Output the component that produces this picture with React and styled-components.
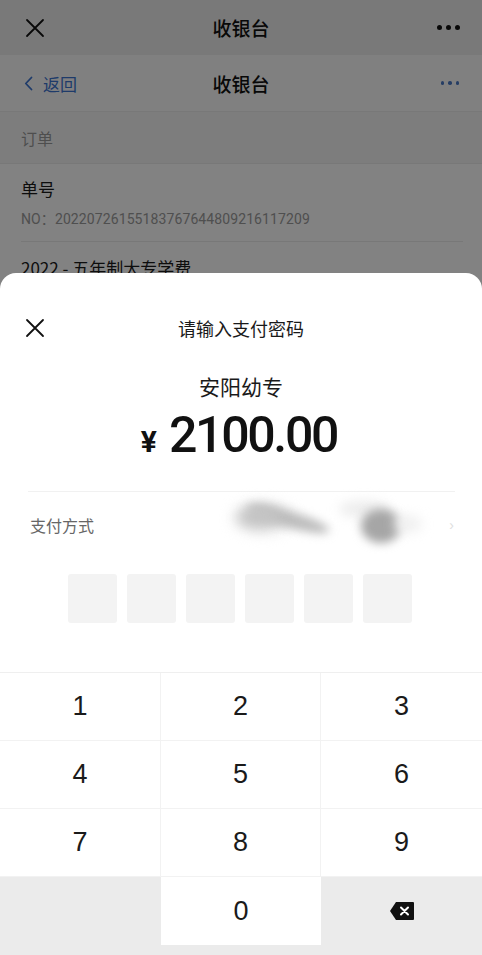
import React from "react";
import styled, { createGlobalStyle } from "styled-components";

const Global = createGlobalStyle`
  html, body { margin: 0; padding: 0; }
  body { font-family: "Noto Sans CJK SC", "Noto Sans", sans-serif; background: #fff; }
  * { box-sizing: border-box; }
`;

const CJK = `"Noto Sans CJK SC", "Noto Sans", sans-serif`;

const Page = styled.div`
  position: relative;
  width: 482px;
  height: 955px;
  overflow: hidden;
  background: #fff;
  display: flex;
  flex-direction: column;
`;

const WxBar = styled.div`
  height: 55px;
  background: #ededed;
  display: flex;
  align-items: center;
  justify-content: space-between;
  padding: 0 22px 0 25px;
  position: relative;
`;

const BarTitle = styled.div`
  position: absolute;
  left: 0;
  right: 0;
  text-align: center;
  font-family: ${CJK};
  font-size: ${(p) => p.$size || 19}px;
  font-weight: 500;
  color: #111;
  pointer-events: none;
`;

const Dots = styled.div`
  display: flex;
  gap: ${(p) => p.$gap}px;
  span {
    width: ${(p) => p.$dot}px;
    height: ${(p) => p.$dot}px;
    border-radius: 50%;
    background: ${(p) => p.$color};
  }
`;

const PageHeader = styled.div`
  height: 57px;
  background: #fcfcfc;
  border-bottom: 1px solid #ececec;
  display: flex;
  align-items: center;
  justify-content: space-between;
  padding: 0 23px 0 24px;
  position: relative;
`;

const Back = styled.div`
  display: flex;
  align-items: center;
  gap: 10px;
  color: #3c74d0;
  font-family: ${CJK};
  font-size: 17px;
`;

const SectionHead = styled.div`
  height: 52px;
  background: #f6f6f6;
  border-bottom: 1px solid #ececec;
  display: flex;
  align-items: center;
  padding-left: 21px;
  color: #9a9a9a;
  font-size: 16px;
  font-family: ${CJK};
`;

const Item = styled.div`
  margin: 0 19px 0 21px;
  padding: ${(p) => (p.$first ? "12px 0 11px" : "13px 0 10px")};
  border-bottom: 1px solid #ececec;
`;

const ItemTitle = styled.div`
  font-size: 17px;
  color: #1a1a1a;
  line-height: 26px;
  font-family: ${CJK};
`;

const ItemSub = styled.div`
  margin-top: 6px;
  font-size: 14px;
  color: #9b9b9b;
  line-height: 22px;
  font-family: "Roboto", ${CJK};
  letter-spacing: 0.1px;
`;

const Dim = styled.div`
  position: absolute;
  inset: 0;
  background: rgba(0, 0, 0, 0.49);
`;

const Sheet = styled.div`
  position: absolute;
  left: 0;
  right: 0;
  bottom: 0;
  height: 682px;
  background: #fff;
  border-radius: 16px 16px 0 0;
  display: flex;
  flex-direction: column;
`;

const SheetTitle = styled.div`
  position: relative;
  height: 26px;
  margin-top: 42px;
  display: flex;
  align-items: center;
  padding-left: 25px;
`;

const TitleText = styled.div`
  position: absolute;
  left: 0;
  right: 0;
  text-align: center;
  font-size: 18px;
  color: #1a1a1a;
  font-family: ${CJK};
  line-height: 26px;
`;

const Merchant = styled.div`
  margin-top: 31px;
  text-align: center;
  font-size: 21px;
  line-height: 28px;
  color: #1a1a1a;
  font-family: ${CJK};
`;

const Amount = styled.div`
  margin-top: 5px;
  height: 60px;
  display: flex;
  align-items: baseline;
  justify-content: center;
  color: #111;
  font-family: "Roboto", sans-serif;
  font-weight: 500;
  padding-right: 4px;
`;

const Yen = styled.span`
  font-size: 30px;
  font-weight: 700;
  margin-right: 12px;
  line-height: 60px;
`;

const Num = styled.span`
  font-size: 50px;
  letter-spacing: -2.3px;
  line-height: 60px;
`;

const Divider = styled.div`
  margin: 26px 27px 0 28px;
  height: 1px;
  background: #f1f1f1;
`;

const PayRow = styled.div`
  height: 66px;
  display: flex;
  align-items: center;
  padding: 0 28px 0 30px;
`;

const PayLabel = styled.div`
  font-size: 16px;
  color: #666;
  font-family: ${CJK};
  flex: 1;
`;

const Redacted = styled.div`
  position: relative;
  width: 180px;
  height: 56px;
  margin-right: 30px;
`;

const Blob = styled.div`
  position: absolute;
  background: ${(p) => p.$c};
  filter: blur(${(p) => p.$b}px);
  border-radius: 50%;
`;

const Chevron = styled.div`
  color: #dedede;
  font-size: 14px;
  font-family: "Liberation Sans", sans-serif;
`;

const Boxes = styled.div`
  margin-top: 16px;
  display: flex;
  gap: 10px;
  padding-left: 68px;
`;

const Box = styled.div`
  width: 49px;
  height: 49px;
  background: #f3f3f3;
  border-radius: 3px;
`;

const KeypadWrap = styled.div`
  margin-top: auto;
  background: #ebebeb;
  padding-bottom: 10px;
  border-top: 1px solid #efefef;
`;

const Keypad = styled.div`
  display: grid;
  grid-template-columns: 161px 160px 161px;
  grid-auto-rows: 68px;
`;

const Key = styled.div`
  display: flex;
  align-items: center;
  justify-content: center;
  background: ${(p) => (p.$gray ? "#ebebeb" : "#fff")};
  border-right: ${(p) => (p.$edge ? "none" : "1px solid #f2f2f2")};
  border-bottom: ${(p) => (p.$bottom ? "none" : "1px solid #f2f2f2")};
  font-family: "Liberation Sans", "Arial", sans-serif;
  font-size: 27px;
  color: #1a1a1a;
`;

const CloseIcon = ({ size = 20 }) => (
  <svg width={size} height={size} viewBox="0 0 20 20">
    <path d="M2 2 L18 18 M18 2 L2 18" stroke="#111" strokeWidth="1.8" strokeLinecap="round" />
  </svg>
);

const BackspaceIcon = () => (
  <svg width="26" height="20" viewBox="0 0 26 20">
    <path d="M7 1 H24 a1 1 0 0 1 1 1 V18 a1 1 0 0 1 -1 1 H7 L1 10 Z" fill="#111" />
    <path d="M12 6.5 L19 13.5 M19 6.5 L12 13.5" stroke="#fff" strokeWidth="2" strokeLinecap="round" />
  </svg>
);

const blobs = [
  { c: "#e4e4e4", b: 7, s: { left: -6, top: 6, width: 60, height: 30 } },
  { c: "#bcbcbc", b: 5, s: { left: 6, top: 14, width: 86, height: 16, transform: "rotate(16deg)" } },
  { c: "#c4c4c4", b: 6, s: { left: 0, top: 10, width: 40, height: 20 } },
  { c: "#ececec", b: 6, s: { left: 100, top: 4, width: 50, height: 16 } },
  { c: "#a6a6a6", b: 5, s: { left: 122, top: 12, width: 40, height: 34 } },
  { c: "#f0f0f0", b: 6, s: { left: 155, top: 18, width: 28, height: 18 } },
];

export default function App() {
  const keys = ["1", "2", "3", "4", "5", "6", "7", "8", "9"];
  return (
    <>
      <Global />
      <Page>
        <WxBar>
          <CloseIcon />
          <BarTitle>收银台</BarTitle>
          <Dots $gap={4} $dot={5} $color="#111">
            <span />
            <span />
            <span />
          </Dots>
        </WxBar>
        <PageHeader>
          <Back>
            <svg width="9" height="15" viewBox="0 0 9 15">
              <path d="M7.5 1.5 L1.8 7.5 L7.5 13.5" stroke="#3c74d0" strokeWidth="1.8" fill="none" strokeLinecap="round" strokeLinejoin="round" />
            </svg>
            返回
          </Back>
          <BarTitle $size={19}>收银台</BarTitle>
          <Dots $gap={4} $dot={3.5} $color="#4a78c4">
            <span />
            <span />
            <span />
          </Dots>
        </PageHeader>
        <SectionHead>订单</SectionHead>
        <Item $first>
          <ItemTitle>单号</ItemTitle>
          <ItemSub>NO：20220726155183767644809216117209</ItemSub>
        </Item>
        <Item>
          <ItemTitle>2022 - 五年制大专学费</ItemTitle>
        </Item>
        <Dim />
        <Sheet>
          <SheetTitle>
            <CloseIcon />
            <TitleText>请输入支付密码</TitleText>
          </SheetTitle>
          <Merchant>安阳幼专</Merchant>
          <Amount>
            <Yen>¥</Yen>
            <Num>2100.00</Num>
          </Amount>
          <Divider />
          <PayRow>
            <PayLabel>支付方式</PayLabel>
            <Redacted>
              {blobs.map((b, i) => (
                <Blob key={i} $c={b.c} $b={b.b} style={b.s} />
              ))}
            </Redacted>
            <Chevron>›</Chevron>
          </PayRow>
          <Boxes>
            {Array.from({ length: 6 }).map((_, i) => (
              <Box key={i} />
            ))}
          </Boxes>
          <KeypadWrap>
            <Keypad>
              {keys.map((k, i) => (
                <Key key={k} $edge={i % 3 === 2}>
                  {k}
                </Key>
              ))}
              <Key $gray $edge $bottom />
              <Key $edge $bottom>0</Key>
              <Key $gray $edge $bottom>
                <BackspaceIcon />
              </Key>
            </Keypad>
          </KeypadWrap>
        </Sheet>
      </Page>
    </>
  );
}
